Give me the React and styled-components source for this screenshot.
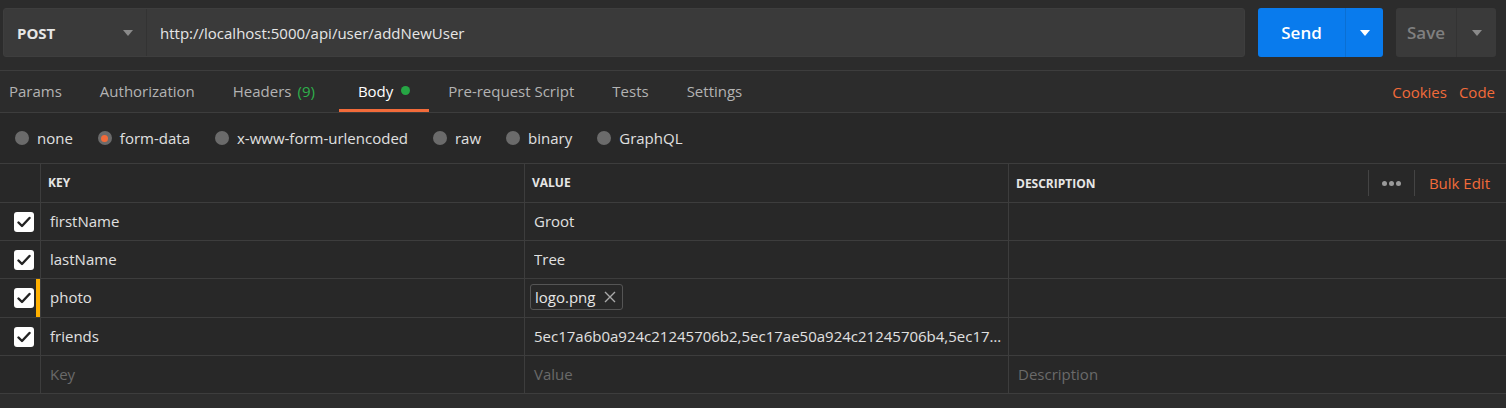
import React from "react";
import styled, { createGlobalStyle } from "styled-components";

const Global = createGlobalStyle`
  html, body { margin: 0; padding: 0; background: #282828; }
  body { font-family: "Open Sans", "Noto Sans", sans-serif; color: #e0e0e0; }
  * { box-sizing: border-box; }
`;

const Page = styled.div`
  width: 1506px;
  height: 408px;
  background: #2d2d2d;
  overflow: hidden;
`;

const TopBar = styled.div`
  display: flex;
  align-items: center;
  height: 71px;
  padding: 8px 10px 13px 3px;
  gap: 13px;
  background: #2c2c2c;
  border-bottom: 1px solid #3d3d3d;
`;

const UrlBox = styled.div`
  flex: 1;
  height: 49px;
  display: flex;
  background: #3a3a3a;
  border: 1px solid #3e3e3e;
  border-radius: 3px;
  overflow: hidden;
`;

const Method = styled.div`
  width: 143px;
  display: flex;
  align-items: center;
  justify-content: space-between;
  padding: 0 13px 0 13px;
  border-right: 1px solid #333;
  font-size: 15px;
  font-weight: 700;
  color: #e6e6e6;
`;

const Url = styled.div`
  flex: 1;
  display: flex;
  align-items: center;
  padding-left: 13px;
  font-size: 15px;
  color: #e6e6e6;
`;

const Caret = ({ color = "#8a8a8a" }) => (
  <svg width="10" height="6" viewBox="0 0 10 6">
    <path d="M0 0 L10 0 L5 6 Z" fill={color} />
  </svg>
);

const SplitButton = styled.div`
  display: flex;
  height: 49px;
  width: ${(p) => p.$w}px;
  border-radius: 3px;
  background: ${(p) => p.$bg};
  overflow: hidden;
`;

const SplitMain = styled.div`
  flex: 1;
  display: flex;
  align-items: center;
  justify-content: center;
  font-size: 17px;
  font-weight: 600;
  color: ${(p) => p.$color};
  border-right: 1px solid ${(p) => p.$line};
`;

const SplitArrow = styled.div`
  width: ${(p) => p.$w}px;
  display: flex;
  align-items: center;
  justify-content: center;
`;

const TabsRow = styled.div`
  display: flex;
  align-items: stretch;
  height: 42px;
  background: #2c2c2c;
  border-bottom: 1px solid #3d3d3d;
  padding-right: 11px;
`;

const Tab = styled.div`
  display: flex;
  align-items: center;
  padding: 1px 19px 0;
  padding-left: ${(p) => (p.$first ? "9px" : "19px")};
  margin-left: ${(p) => (p.$active ? "5px" : "0")};
  font-size: 15px;
  color: ${(p) => (p.$active ? "#ffffff" : "#b3b3b3")};
  border-bottom: 3px solid ${(p) => (p.$active ? "#f26b3a" : "transparent")};
`;

const Count = styled.span`
  color: #2eb04b;
  margin-left: 6px;
`;

const Dot = styled.span`
  width: 9px;
  height: 9px;
  border-radius: 50%;
  background: #26a644;
  margin-left: 8px;
`;

const Spacer = styled.div`
  flex: 1;
`;

const OrangeLink = styled.div`
  display: flex;
  align-items: center;
  font-size: 15px;
  color: #f26b3a;
  margin-left: ${(p) => p.$ml || 0}px;
`;

const RadioRow = styled.div`
  display: flex;
  align-items: center;
  height: 51px;
  padding-left: 15px;
  gap: 25px;
  background: #282828;
  border-bottom: 1px solid #3d3d3d;
`;

const RadioItem = styled.div`
  display: flex;
  align-items: center;
  gap: 8px;
  font-size: 15px;
  color: #e0e0e0;
`;

const RadioCircle = styled.span`
  width: 14px;
  height: 14px;
  border-radius: 50%;
  background: #6b6b6b;
  display: flex;
  align-items: center;
  justify-content: center;
  &::after {
    content: "";
    width: 7px;
    height: 7px;
    border-radius: 50%;
    background: ${(p) => (p.$on ? "#f26b3a" : "transparent")};
  }
`;

const Table = styled.div`
  background: #282828;
`;

const Row = styled.div`
  display: grid;
  grid-template-columns: 40px 484px 484px 1fr;
  height: ${(p) => p.$h || 38}px;
  border-bottom: 1px solid #3d3d3d;
`;

const CheckCell = styled.div`
  display: flex;
  align-items: center;
  padding-left: 14px;
  position: relative;
  ${(p) =>
    p.$mark &&
    `&::after { content: ""; position: absolute; right: 0; top: 0; bottom: 0; width: 4px; background: #ffb000; }`}
`;

const Cell = styled.div`
  display: flex;
  align-items: center;
  padding-left: ${(p) => p.$pl || 9}px;
  padding-bottom: 2px;
  border-left: 1px solid #3d3d3d;
  font-size: 15px;
  color: ${(p) => (p.$ph ? "#6a6a6a" : "#e0e0e0")};
  white-space: nowrap;
  overflow: hidden;
  min-width: 0;
`;

const HeadText = styled.span`
  font-size: 12px;
  font-weight: 700;
  color: #e6e6e6;
`;

const Ellipsis = styled.span`
  display: block;
  overflow: hidden;
  text-overflow: ellipsis;
  white-space: nowrap;
  padding-right: 4px;
  max-width: 100%;
`;

const Check = styled.div`
  width: 20px;
  height: 20px;
  border-radius: 3px;
  background: #ffffff;
  display: flex;
  align-items: center;
  justify-content: center;
`;

const FileTag = styled.div`
  display: flex;
  align-items: center;
  gap: 9px;
  height: 26px;
  padding: 0 6px 0 4px;
  border: 1px solid #555;
  border-radius: 3px;
  margin-left: -4px;
  font-size: 15px;
  color: #e6e6e6;
`;

const DescHead = styled.div`
  display: flex;
  align-items: center;
  border-left: 1px solid #3d3d3d;
  padding-left: 7px;
`;

const HeadTools = styled.div`
  margin-left: auto;
  display: flex;
  align-items: center;
  height: 100%;
  padding-right: 16px;
`;

const ToolDivider = styled.span`
  width: 1px;
  height: 26px;
  background: #444;
`;

const Dots = styled.span`
  display: flex;
  gap: 2px;
  padding: 0 13px;
  & > i {
    width: 5px;
    height: 5px;
    border-radius: 50%;
    background: #9a9a9a;
  }
`;

const BulkEdit = styled.span`
  font-size: 15px;
  color: #f26b3a;
  margin-left: 14px;
`;

const CheckIcon = () => (
  <svg width="14" height="12" viewBox="0 0 14 12">
    <path d="M1.5 6.5 L5 10 L12.5 2" stroke="#222" strokeWidth="2.4" fill="none" strokeLinecap="round" strokeLinejoin="round" />
  </svg>
);

const XIcon = () => (
  <svg width="12" height="12" viewBox="0 0 12 12">
    <path d="M1 1 L11 11 M11 1 L1 11" stroke="#aaa" strokeWidth="1.4" />
  </svg>
);

const rows = [
  { k: "firstName", v: "Groot" },
  { k: "lastName", v: "Tree" },
  { k: "photo", file: "logo.png", mark: true, h: 39 },
  { k: "friends", v: "5ec17a6b0a924c21245706b2,5ec17ae50a924c21245706b4,5ec17ae50a924c21245706b6" },
];

export default function App() {
  return (
    <Page>
      <Global />
      <TopBar>
        <UrlBox>
          <Method>
            POST
            <Caret />
          </Method>
          <Url>http://localhost:5000/api/user/addNewUser</Url>
        </UrlBox>
        <SplitButton $w={125} $bg="#097bed">
          <SplitMain $color="#ffffff" $line="#0a6fd3">Send</SplitMain>
          <SplitArrow $w={37}>
            <Caret color="#ffffff" />
          </SplitArrow>
        </SplitButton>
        <SplitButton $w={100} $bg="#3a3a3a">
          <SplitMain $color="#808080" $line="#333">Save</SplitMain>
          <SplitArrow $w={39}>
            <Caret color="#8a8a8a" />
          </SplitArrow>
        </SplitButton>
      </TopBar>
      <TabsRow>
        <Tab $first>Params</Tab>
        <Tab>Authorization</Tab>
        <Tab>
          Headers<Count>(9)</Count>
        </Tab>
        <Tab $active>
          Body<Dot />
        </Tab>
        <Tab>Pre-request Script</Tab>
        <Tab>Tests</Tab>
        <Tab>Settings</Tab>
        <Spacer />
        <OrangeLink>Cookies</OrangeLink>
        <OrangeLink $ml={12}>Code</OrangeLink>
      </TabsRow>
      <RadioRow>
        {["none", "form-data", "x-www-form-urlencoded", "raw", "binary", "GraphQL"].map((l) => (
          <RadioItem key={l}>
            <RadioCircle $on={l === "form-data"} />
            {l}
          </RadioItem>
        ))}
      </RadioRow>
      <Table>
        <Row $h={39}>
          <CheckCell />
          <Cell $pl={7}>
            <HeadText>KEY</HeadText>
          </Cell>
          <Cell $pl={7}>
            <HeadText>VALUE</HeadText>
          </Cell>
          <DescHead>
            <HeadText>DESCRIPTION</HeadText>
            <HeadTools>
              <ToolDivider />
              <Dots>
                <i />
                <i />
                <i />
              </Dots>
              <ToolDivider />
              <BulkEdit>Bulk Edit</BulkEdit>
            </HeadTools>
          </DescHead>
        </Row>
        {rows.map((r) => (
          <Row key={r.k} $h={r.h}>
            <CheckCell $mark={r.mark}>
              <Check>
                <CheckIcon />
              </Check>
            </CheckCell>
            <Cell>{r.k}</Cell>
            <Cell>
              {r.file ? (
                <FileTag>
                  {r.file}
                  <XIcon />
                </FileTag>
              ) : (
                <Ellipsis>{r.v}</Ellipsis>
              )}
            </Cell>
            <Cell />
          </Row>
        ))}
        <Row>
          <CheckCell />
          <Cell $ph>Key</Cell>
          <Cell $ph>Value</Cell>
          <Cell $ph>Description</Cell>
        </Row>
      </Table>
    </Page>
  );
}
